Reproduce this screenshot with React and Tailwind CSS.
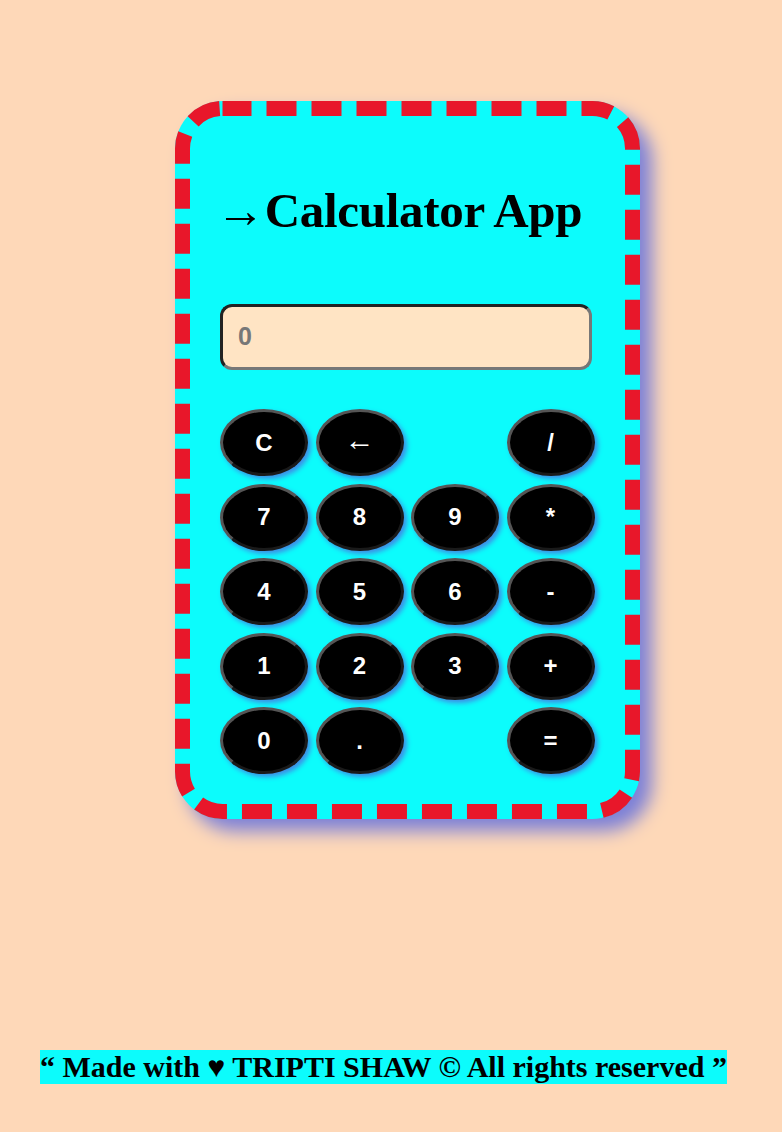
const KEYS = [
  ['C', '←', null, '/'],
  ['7', '8', '9', '*'],
  ['4', '5', '6', '-'],
  ['1', '2', '3', '+'],
  ['0', '.', null, '='],
]

// ── Single key ─────────────────────────────────────────────────────────────
function Key({ label }) {
  if (!label) return <div />
  const arrow = label === '←'
  return (
    <button
      className={`w-[88px] h-[67px] rounded-[50%] bg-black text-white border-[3px] border-solid border-t-[#555] border-l-[#555] border-r-[#1a1a1a] border-b-[#1a1a1a] shadow-[3px_3px_5px_#3f8ce6] flex items-center justify-center leading-none ${
        arrow ? "font-['Liberation_Serif',serif] text-[30px] font-normal pb-[6px]" : "font-['Liberation_Sans',Arial,sans-serif] text-[24px] font-bold"
      }`}>
      {label}
    </button>
  )
}

export default function App() {
  return (
    <div className="min-h-[1132px] bg-[#fed8b8] font-['Liberation_Serif',serif] pt-[101px]">
      {/* Card */}
      <div className="relative ml-[175px] w-[465px] h-[718px] rounded-[48px] border-[15px] border-transparent bg-[#0cfcfc] shadow-[12px_12px_18px_#7c80d8] px-[30px]">
        <svg className="absolute left-[-15px] top-[-15px] pointer-events-none" width="465" height="718">
          <rect x="7.5" y="7.5" width="450" height="703" rx="40" fill="none" stroke="#e8172a" strokeWidth="15" strokeDasharray="30 15" strokeDashoffset="1" />
        </svg>

        <h1 className="relative mt-[67px] text-[49px] leading-[56px] font-bold text-black whitespace-nowrap tracking-[-0.3px] ml-[-4px]">
          →Calculator App
        </h1>

        <div className="relative mt-[65px] w-[372px] h-[66px] rounded-[12px] bg-[#ffe4c4] border-[3px] border-t-[#222] border-l-[#222] border-r-[#777] border-b-[#777] flex items-center px-[15px]">
          <span className="font-['Liberation_Sans',Arial,sans-serif] font-bold text-[25px] text-[#777]">0</span>
        </div>

        <div className="relative mt-[39px] grid grid-cols-[repeat(4,88px)] gap-x-[7.5px] gap-y-[7.5px]">
          {KEYS.flat().map((k, i) => <Key key={i} label={k} />)}
        </div>
      </div>

      {/* Footer */}
      <div className="mt-[231px] ml-[40px]">
        <span className="inline-block bg-[#0cfcfc] text-black font-bold text-[30px] leading-[34px]">
          “ Made with ♥ TRIPTI SHAW © All rights reserved ”
        </span>
      </div>
    </div>
  )
}
